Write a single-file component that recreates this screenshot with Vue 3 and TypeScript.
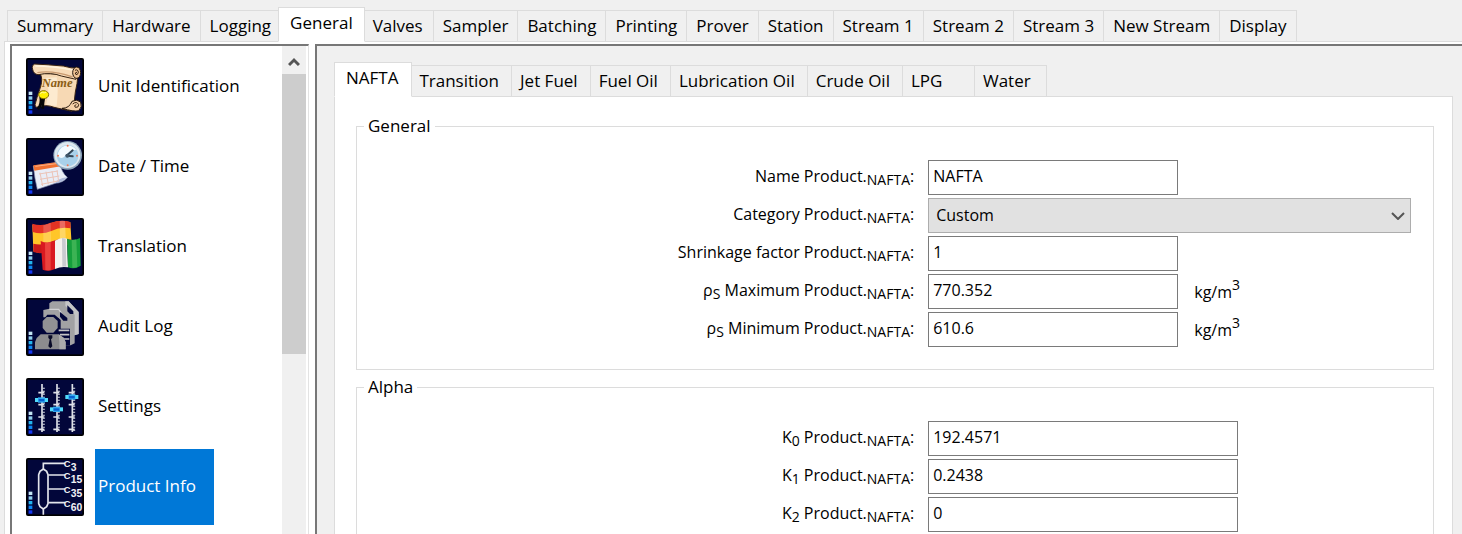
<script setup lang="ts">
import { ref } from 'vue'

interface Field {
  id: string
  prefix?: string
  sub?: string
  text: string
  value: string
  unit?: boolean
  options?: string[]
}

const pages = ['Summary', 'Hardware', 'Logging', 'General', 'Valves', 'Sampler', 'Batching', 'Printing', 'Prover', 'Station', 'Stream 1', 'Stream 2', 'Stream 3', 'New Stream', 'Display']
const products = ['NAFTA', 'Transition', 'Jet Fuel', 'Fuel Oil', 'Lubrication Oil', 'Crude Oil', 'LPG', 'Water']
const sections = ['Unit Identification', 'Date / Time', 'Translation', 'Audit Log', 'Settings', 'Product Info']

const page = ref('General')
const product = ref('NAFTA')
const section = ref('Product Info')

const general = ref<Field[]>([
  { id: 'name', text: 'Name Product.', value: 'NAFTA' },
  { id: 'category', text: 'Category Product.', value: 'Custom', options: ['Custom'] },
  { id: 'shrinkage', text: 'Shrinkage factor Product.', value: '1' },
  { id: 'rho-max', prefix: 'ρ', sub: 'S', text: ' Maximum Product.', value: '770.352', unit: true },
  { id: 'rho-min', prefix: 'ρ', sub: 'S', text: ' Minimum Product.', value: '610.6', unit: true },
])
const alpha = ref<Field[]>([
  { id: 'k0', prefix: 'K', sub: '0', text: ' Product.', value: '192.4571' },
  { id: 'k1', prefix: 'K', sub: '1', text: ' Product.', value: '0.2438' },
  { id: 'k2', prefix: 'K', sub: '2', text: ' Product.', value: '0' },
])
const groups = [
  { title: 'General', fields: general, wide: false },
  { title: 'Alpha', fields: alpha, wide: true },
]

const levels = ['#c4e6f4', '#8fd0ee', '#22b4ee', '#0a86f4', '#1438f0']
const sliders = [
  { x: 48, knob: 66 },
  { x: 93, knob: 94 },
  { x: 139, knob: 57 },
]
const fractions = [
  { y: 16, n: '3' },
  { y: 51, n: '15' },
  { y: 93, n: '35' },
  { y: 134, n: '60' },
]
</script>

<template>
  <div class="window">
    <div class="tabs page-tabs" role="tablist">
      <button v-for="p in pages" :key="p" class="tab" :class="{ active: p === page }" type="button" role="tab" :aria-selected="p === page" @click="page = p">{{ p }}</button>
    </div>

    <div class="page">
      <nav class="sidebar">
        <div class="list">
          <button v-for="(s, i) in sections" :key="s" class="item" :class="{ chosen: s === section }" type="button" @click="section = s">
            <svg class="icon" viewBox="0 0 174 174" aria-hidden="true">
              <rect width="174" height="174" rx="6" fill="#000" />
              <rect x="5" y="5" width="164" height="164" fill="#02063a" />
              <rect v-for="(c, n) in levels" :key="c" x="8" :y="101 + n * 14" width="11" height="10" :fill="c" />

              <g v-if="i === 0" stroke-linejoin="round">
                <path d="M42 46C56 70 38 96 30 130Q24 142 30 148Q62 138 84 148L138 160Q146 134 148 102Q154 78 156 50Z" fill="#f7d9b4" stroke="#3a2412" stroke-width="3" />
                <path d="M60 60Q74 92 60 140L92 144Q98 96 92 58Z" fill="#fdebd0" />
                <path d="M26 18Q16 22 20 34Q22 48 36 50Q76 42 106 54L150 64L160 30Q136 32 112 24Q66 20 26 18Z" fill="#f8dbb8" stroke="#3a2412" stroke-width="3" />
                <path d="M28 24Q80 24 140 36" fill="none" stroke="#fff2dc" stroke-width="5" />
                <path d="M34 44Q78 36 140 57" fill="none" stroke="#c99a70" stroke-width="4" />
                <ellipse cx="152" cy="44" rx="12" ry="17" fill="#eec294" stroke="#24160c" stroke-width="3" />
                <path d="M147 37Q156 32 157 44Q154 54 148 48Q148 42 153 43" fill="none" stroke="#3a2412" stroke-width="3" />
                <path d="M108 151Q130 151 138 130Q152 122 164 132Q170 148 158 158Q144 162 108 151Z" fill="#f5d1a9" stroke="#24160c" stroke-width="3" />
                <path d="M140 138Q152 128 158 140Q158 150 148 148Q142 142 151 140" fill="none" stroke="#3a2412" stroke-width="3" />
                <path d="M44 116Q48 136 36 154M54 116Q50 136 50 152" fill="none" stroke="#080808" stroke-width="8" />
                <ellipse cx="53" cy="110" rx="15" ry="12" fill="#fff000" stroke="#827000" stroke-width="3" />
                <path d="M43 108L48 102L54 105L61 102" fill="none" stroke="#fffb9c" stroke-width="3" />
                <text x="47" y="88" class="scroll-text">Name</text>
              </g>

              <g v-else-if="i === 1">
                <path d="M22 84L101 72Q106 104 124 118Q112 134 88 136L34 154Q26 122 22 84Z" fill="#e9edf7" stroke="#8a94b4" stroke-width="2" />
                <path d="M22 82L102 71L105 85L25 98Z" fill="#f17232" />
                <path d="M28 85L98 76" stroke="#ffb184" stroke-width="3" />
                <path d="M88 136Q92 122 124 118Q111 132 88 136Z" fill="#aebadb" />
                <path d="M39 108L96 99M42 124L100 114M45 139L96 129M42 104L50 144M60 101L67 139M78 99L84 134M93 97L98 130" fill="none" stroke="#ecc4b8" stroke-width="3" />
                <circle cx="125" cy="52" r="43" fill="#8ca4ba" />
                <circle cx="124" cy="51" r="39" fill="#dce8f0" />
                <circle cx="125" cy="53" r="32" fill="#a9d1ea" />
                <path d="M95 55A31 31 0 0 1 151 35Q130 36 117 54Q107 65 95 55Z" fill="#f4fbff" />
                <g fill="#ef7752"><circle cx="125" cy="23" r="3" /><circle cx="153" cy="53" r="3" /><circle cx="125" cy="82" r="3" /><circle cx="96" cy="53" r="3" /></g>
                <path d="M122 53L140 37M122 53L140 55" stroke="#324657" stroke-width="6" stroke-linecap="round" />
                <circle cx="124" cy="53" r="6" fill="#405668" />
              </g>

              <g v-else-if="i === 2">
                <path d="M19 20Q46 28 74 16Q104 4 133 13L137 80Q104 76 76 93Q52 112 22 100Z" fill="#ffc629" />
                <path d="M19 17Q48 27 74 14Q106 3 133 12L134 31Q104 25 76 39Q48 51 20 42Z" fill="#e33224" />
                <path d="M22 77Q50 84 78 70Q104 60 136 65L137 82Q104 76 76 93Q52 112 22 102Z" fill="#c91b1b" />
                <path d="M52 22Q66 19 74 14L76 91Q64 101 52 105Z" fill="#fff" opacity=".18" />
                <path d="M101 9Q111 7 117 9L120 79Q110 79 102 82Z" fill="#fff" opacity=".28" />
                <path d="M44 69Q64 79 87 68V153Q68 162 50 155Z" fill="#d91920" />
                <path d="M87 68Q106 56 123 62L126 148Q106 144 87 153Z" fill="#f4f2ee" />
                <path d="M123 62Q142 70 162 60L164 143Q145 156 126 148Z" fill="#159f3c" />
                <path d="M57 74Q67 75 74 73V157Q64 158 58 156Z" fill="#ff6c5b" opacity=".5" />
                <path d="M108 60Q115 60 119 62L121 146Q115 145 109 146Z" fill="#c9cbd0" />
                <path d="M137 66Q145 67 151 64L154 147Q146 150 139 149Z" fill="#56c264" opacity=".6" />
              </g>

              <g v-else-if="i === 3">
                <path d="M52 58V36L70 32V16L79 10H128L158 42V108L146 112V136L134 142H118L98 104V60Z" fill="#a2a2a4" />
                <path d="M128 10L158 42V108L146 112V50L118 24V10Z" fill="#c4c4c6" />
                <path d="M70 34H98L104 42V52" fill="none" stroke="#d2d2d4" stroke-width="4" />
                <path d="M102 42L124 60V68H112L102 56ZM124 22L142 40V48H132L124 40Z" fill="#02063a" />
                <path d="M56 60L64 50H86L104 66V92H132V142H112L84 118Z" fill="#02063a" />
                <path d="M98 97H130M102 110H130M112 123H130" stroke="#c5c5c7" stroke-width="5" />
                <path d="M62 57H82L95 69V90L82 104H62L50 90V69Z" fill="#929294" />
                <path d="M44 109H98L114 120L119 133V154H27V133L32 120Z" fill="#8c8c8e" />
                <path d="M98 109L114 120L119 133V154H100V132Z" fill="#aaaaac" />
                <path d="M67 112H79V120L75 124L79 145L73 151L67 145L71 124L67 120Z" fill="#090b28" />
              </g>

              <g v-else-if="i === 4">
                <g v-for="s in sliders" :key="s.x">
                  <path :d="`M${s.x} 18V162`" stroke="#dde0e8" stroke-width="5" />
                  <path :d="`M${s.x + 5} 29V158`" stroke="#dde0e8" stroke-width="7" stroke-dasharray="3 6" />
                  <path :d="`M${s.x - 11} 44H${s.x + 7}M${s.x - 11} 80H${s.x + 7}M${s.x - 11} 117H${s.x + 7}M${s.x - 11} 154H${s.x + 7}`" stroke="#dde0e8" stroke-width="5" />
                  <rect :x="s.x - 21" :y="s.knob - 6" width="39" height="12" fill="#52dbfa" />
                  <rect :x="s.x - 12" :y="s.knob - 8" width="21" height="16" fill="#30a8f0" />
                  <rect :x="s.x - 10" :y="s.knob - 3" width="17" height="7" fill="#075fd0" />
                </g>
              </g>

              <g v-else>
                <path d="M52 33V16H117M67 51H117M67 93H117M67 134H117M52 153V170" fill="none" stroke="#e3e5ec" stroke-width="5" />
                <path d="M52 33L62 40L66 50V137L62 146L52 153L42 146L38 137V50L42 40Z" fill="#02063a" stroke="#e3e5ec" stroke-width="5" />
                <g v-for="f in fractions" :key="f.n">
                  <text x="113" :y="f.y + 12" class="symbol">C</text>
                  <text x="134" :y="f.y + 24" class="index">{{ f.n }}</text>
                </g>
              </g>
            </svg>
            <span class="caption">{{ s }}</span>
          </button>
        </div>
        <div class="scrollbar">
          <button class="scroll-up" type="button" aria-label="Scroll up">
            <svg viewBox="0 0 12 10" width="12" height="10"><path d="M1 8L6 3L11 8" fill="none" stroke="#555" stroke-width="3" /></svg>
          </button>
          <div class="thumb"></div>
        </div>
      </nav>

      <main class="content">
        <div class="tabs product-tabs" role="tablist">
          <button v-for="p in products" :key="p" class="tab" :class="{ active: p === product }" type="button" role="tab" :aria-selected="p === product" @click="product = p">{{ p }}</button>
        </div>
        <div class="panel">
          <fieldset v-for="g in groups" :key="g.title" :class="{ wide: g.wide }">
            <legend>{{ g.title }}</legend>
            <div v-for="f in g.fields.value" :key="f.id" class="row">
              <label :for="f.id">{{ f.prefix }}<sub v-if="f.sub">{{ f.sub }}</sub>{{ f.text }}<sub>NAFTA</sub>:</label>
              <div v-if="f.options" class="choice">
                <select :id="f.id" v-model="f.value">
                  <option v-for="o in f.options" :key="o">{{ o }}</option>
                </select>
                <svg class="chevron" viewBox="0 0 14 8" width="14" height="8" aria-hidden="true"><path d="M1 1L7 7L13 1" fill="none" stroke="#555" stroke-width="2" /></svg>
              </div>
              <input v-else :id="f.id" v-model="f.value" type="text">
              <span v-if="f.unit" class="unit">kg/m<sup>3</sup></span>
            </div>
          </fieldset>
        </div>
      </main>
    </div>
  </div>
</template>

<style>
body {
  margin: 0;
  background: #f0f0f0;
}
</style>

<style scoped>
* {
  box-sizing: border-box;
}
.window {
  display: flex;
  flex-direction: column;
  height: 100vh;
  overflow: hidden;
  padding: 7px 0 0 4px;
  background: #f0f0f0;
  color: #000;
  font: 17px/24px "Open Sans", "Noto Sans", sans-serif;
}
button, input, select {
  font: inherit;
  color: inherit;
  border-radius: 0;
}
.tabs {
  display: flex;
  align-items: flex-end;
  flex: none;
  position: relative;
  z-index: 1;
  margin-bottom: -1px;
}
.page-tabs {
  padding-left: 3px;
}
.tab {
  flex: none;
  min-width: 71px;
  height: 32px;
  margin-right: -1px;
  padding: 0 9px 1px;
  border: 1px solid #dcdcdc;
  background: #f0f0f0;
  text-align: left;
  white-space: nowrap;
}
.tab.active {
  position: relative;
  height: 35px;
  margin: 0 -2px 0 -2px;
  padding: 0 11px 3px;
  border-bottom-color: #fff;
  background: #fff;
}
.page {
  display: flex;
  flex: 1;
  min-height: 0;
  padding: 2px 0 0 5px;
  border: solid #dcdcdc;
  border-width: 1px 0 0 1px;
  background: #fff;
}
.sidebar {
  display: flex;
  flex: none;
  width: 299px;
  margin-right: 6px;
  border: solid #777;
  border-width: 2px 0 0 2px;
  border-right: 1px solid #e3e3e3;
}
.list {
  flex: 1;
  padding: 1px 0 0 14px;
}
.item {
  display: flex;
  align-items: center;
  gap: 11px;
  height: 80px;
  padding: 0;
  border: 0;
  background: none;
  text-align: left;
}
.icon {
  flex: none;
  width: 58px;
  height: 58px;
}
.scroll-text {
  font: italic bold 38px "Liberation Serif", serif;
  fill: #8c5f16;
}
.symbol {
  font: bold 28px "Liberation Sans", sans-serif;
  fill: #f0f1f6;
}
.index {
  font: bold 31px "Liberation Sans", sans-serif;
  fill: #f0f1f6;
}
.caption {
  height: 76px;
  padding: 0 18px 0 3px;
  line-height: 74px;
}
.chosen .caption {
  background: #0078d7;
  color: #fff;
}
.scrollbar {
  flex: none;
  width: 24px;
  margin-right: 2px;
  background: #f0f0f0;
}
.scroll-up {
  display: flex;
  align-items: center;
  justify-content: center;
  width: 100%;
  height: 28px;
  padding: 3px 0 0;
  border: 0;
  background: #f0f0f0;
}
.thumb {
  height: 280px;
  background: #cdcdcd;
}
.content {
  display: flex;
  flex: 1;
  flex-direction: column;
  min-width: 0;
  padding: 16px 9px 0 17px;
  border: solid #777;
  border-width: 2px 0 0 2px;
  background: #f0f0f0;
}
.product-tabs .tab {
  min-width: 73px;
  padding: 0 12px 1px 8px;
}
.product-tabs .tab.active {
  margin-left: 0;
  padding: 0 13px 3px 11px;
}
.panel {
  flex: 1;
  min-height: 0;
  padding: 17px 18px 0 21px;
  overflow: hidden;
  border: 1px solid #dcdcdc;
  border-bottom: 0;
  background: #fff;
}
fieldset {
  display: grid;
  gap: 3px;
  min-width: 0;
  margin: 0 0 5px;
  padding: 22px 0 22px;
  border: 1px solid #dcdcdc;
}
legend {
  margin-left: 7px;
  padding: 0 4px;
}
.row {
  display: flex;
  align-items: center;
  height: 35px;
  padding-left: 2px;
  font-size: 16px;
}
label {
  flex: 0 0 53%;
  padding: 0 14px 4px 0;
  text-align: right;
  white-space: pre;
}
sub, sup {
  font-size: 14px;
  line-height: 0;
}
sub {
  vertical-align: -3px;
}
sup {
  vertical-align: 8px;
}
input {
  width: 250px;
  height: 35px;
  padding: 0 4px 3px;
  border: 1px solid #7a7a7a;
  background: #fff;
}
.wide input {
  width: 310px;
}
.choice {
  display: flex;
  position: relative;
  flex: 1;
  margin-right: 22px;
}
select {
  width: 100%;
  height: 35px;
  padding: 0 32px 1px 7px;
  border: 1px solid #adadad;
  appearance: none;
  background: #e1e1e1;
}
.chevron {
  position: absolute;
  top: 14px;
  right: 6px;
  pointer-events: none;
}
.unit {
  margin-left: 16px;
}
</style>
